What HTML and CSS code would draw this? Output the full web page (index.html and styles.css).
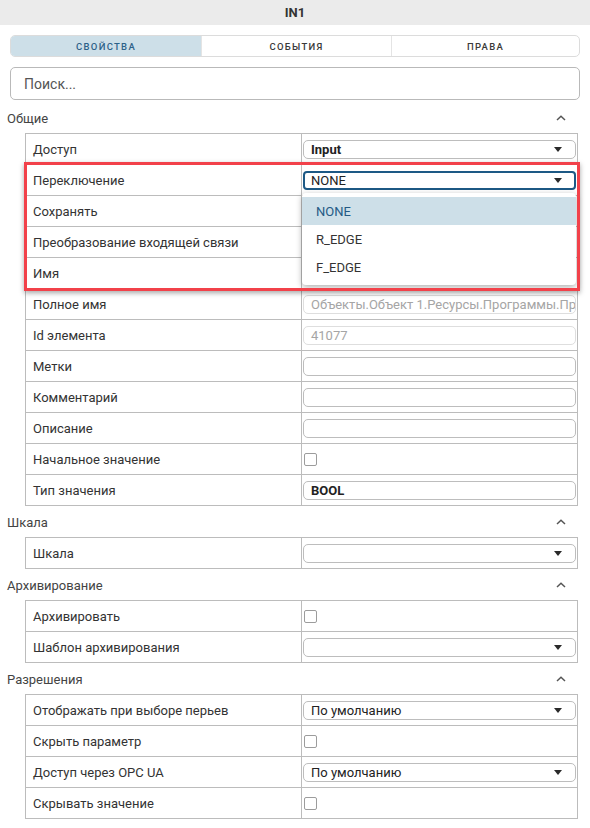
FILE: index.html
```html
<!DOCTYPE html>
<html lang="ru">
<head>
<meta charset="utf-8">
<title>IN1</title>
<link rel="stylesheet" href="styles.css">
</head>
<body>
<div class="title">IN1</div>

<div class="tabs">
  <div class="tab active">Свойства</div>
  <div class="tab">События</div>
  <div class="tab">Права</div>
</div>

<div class="search">Поиск...</div>

<section class="group">
  <div class="group-head"><span>Общие</span><svg class="chev" width="10" height="6" viewBox="0 0 10 6"><polyline points="1,5 5,1.2 9,5" fill="none" stroke="#555" stroke-width="1.5"/></svg></div>
  <div class="grid">
    <div class="row"><div class="label">Доступ</div><div class="value"><div class="select bold">Input<span class="arrow"></span></div></div></div>
    <div class="marked">
      <div class="row"><div class="label">Переключение</div><div class="value anchor">
        <div class="select focused">NONE<span class="arrow"></span></div>
        <ul class="menu">
          <li class="opt selected">NONE</li>
          <li class="opt">R_EDGE</li>
          <li class="opt">F_EDGE</li>
        </ul>
      </div></div>
      <div class="row"><div class="label">Сохранять</div><div class="value"></div></div>
      <div class="row"><div class="label">Преобразование входящей связи</div><div class="value"></div></div>
      <div class="row"><div class="label">Имя</div><div class="value"></div></div>
      <div class="annot"></div>
    </div>
    <div class="row"><div class="label">Полное имя</div><div class="value"><div class="field disabled">Объекты.Объект 1.Ресурсы.Программы.Пр</div></div></div>
    <div class="row"><div class="label">Id элемента</div><div class="value"><div class="field disabled">41077</div></div></div>
    <div class="row"><div class="label">Метки</div><div class="value"><div class="field"></div></div></div>
    <div class="row"><div class="label">Комментарий</div><div class="value"><div class="field"></div></div></div>
    <div class="row"><div class="label">Описание</div><div class="value"><div class="field"></div></div></div>
    <div class="row"><div class="label">Начальное значение</div><div class="value"><span class="check"></span></div></div>
    <div class="row"><div class="label">Тип значения</div><div class="value"><div class="field bold">BOOL</div></div></div>
  </div>
</section>

<section class="group">
  <div class="group-head"><span>Шкала</span><svg class="chev" width="10" height="6" viewBox="0 0 10 6"><polyline points="1,5 5,1.2 9,5" fill="none" stroke="#555" stroke-width="1.5"/></svg></div>
  <div class="grid">
    <div class="row"><div class="label">Шкала</div><div class="value"><div class="select"><span class="arrow"></span></div></div></div>
  </div>
</section>

<section class="group">
  <div class="group-head"><span>Архивирование</span><svg class="chev" width="10" height="6" viewBox="0 0 10 6"><polyline points="1,5 5,1.2 9,5" fill="none" stroke="#555" stroke-width="1.5"/></svg></div>
  <div class="grid">
    <div class="row"><div class="label">Архивировать</div><div class="value"><span class="check"></span></div></div>
    <div class="row"><div class="label">Шаблон архивирования</div><div class="value"><div class="select"><span class="arrow"></span></div></div></div>
  </div>
</section>

<section class="group">
  <div class="group-head"><span>Разрешения</span><svg class="chev" width="10" height="6" viewBox="0 0 10 6"><polyline points="1,5 5,1.2 9,5" fill="none" stroke="#555" stroke-width="1.5"/></svg></div>
  <div class="grid">
    <div class="row"><div class="label">Отображать при выборе перьев</div><div class="value"><div class="select">По умолчанию<span class="arrow"></span></div></div></div>
    <div class="row"><div class="label">Скрыть параметр</div><div class="value"><span class="check"></span></div></div>
    <div class="row"><div class="label">Доступ через OPC UA</div><div class="value"><div class="select">По умолчанию<span class="arrow"></span></div></div></div>
    <div class="row"><div class="label">Скрывать значение</div><div class="value"><span class="check"></span></div></div>
  </div>
</section>
</body>
</html>
```

FILE: styles.css
```css
* { box-sizing: border-box; }

html, body {
  margin: 0;
  padding: 0;
  background: #ffffff;
}

body {
  font-family: Roboto, "Noto Sans", "DejaVu Sans", sans-serif;
  font-size: 13px;
  color: #333;
  width: 590px;
  overflow: hidden;
}

.title {
  height: 25px;
  background: #ebebeb;
  display: flex;
  align-items: center;
  justify-content: center;
  font-weight: 700;
  font-size: 13px;
  color: #333;
}

.tabs {
  margin: 10px 10px 0 10px;
  height: 22px;
  border: 1px solid #dcdcdc;
  border-radius: 5px;
  overflow: hidden;
  display: grid;
  grid-template-columns: 190px 190px 1fr;
}

.tab {
  display: flex;
  align-items: center;
  justify-content: center;
  text-transform: uppercase;
  font-size: 9.5px;
  font-weight: 500;
  letter-spacing: 1.3px;
  color: #3a3a3a;
  border-left: 1px solid #e4e4e4;
}

.tab:first-child { border-left: none; }

.tab.active {
  background: #cddfe8;
  color: #2d6289;
}

.search {
  margin: 10px 10px 2px 10px;
  height: 33px;
  border: 1px solid #b9b9b9;
  border-radius: 5px;
  padding: 0 13px;
  display: flex;
  align-items: center;
  font-size: 14px;
  color: #555;
}

.group-head {
  height: 31px;
  display: flex;
  align-items: center;
  justify-content: space-between;
  padding: 1px 24px 0 7px;
  color: #444;
}

.chev { display: block; }

.grid {
  margin-left: 25px;
  width: 553px;
  border: 1px solid #bcbcbc;
  border-bottom: none;
}

.row {
  display: grid;
  grid-template-columns: 276px 1fr;
  height: 31px;
  border-bottom: 1px solid #bcbcbc;
}

.label {
  border-right: 1px solid #bcbcbc;
  padding: 1px 0 0 7px;
  display: flex;
  align-items: center;
  white-space: nowrap;
  color: #333;
}

.value {
  display: flex;
  align-items: center;
  padding: 0 1px;
  min-width: 0;
}

.anchor { position: relative; }

.select,
.field {
  position: relative;
  width: 100%;
  height: 19px;
  border: 1px solid #bdbdbd;
  border-radius: 5px;
  padding: 0 22px 0 7px;
  display: flex;
  align-items: center;
  white-space: nowrap;
  overflow: hidden;
  color: #222;
  line-height: 17px;
}

.field { padding-right: 4px; }

.bold { font-weight: 700; }

.field.disabled {
  border-color: #dedede;
  color: #a5a5a5;
}

.select.focused {
  border: 2px solid #1d5985;
  border-radius: 4px;
  padding-left: 6px;
}

.arrow {
  position: absolute;
  right: 13px;
  top: 50%;
  margin-top: -2px;
  width: 0;
  height: 0;
  border-left: 4px solid transparent;
  border-right: 4px solid transparent;
  border-top: 5px solid #2a2a2a;
}

.select.focused .arrow { right: 12px; }

.check {
  width: 13px;
  height: 13px;
  margin-left: 1px;
  border: 1.5px solid #9c9c9c;
  border-radius: 2px;
  background: #fff;
}

.marked { position: relative; }

.menu {
  position: absolute;
  top: 28px;
  left: 0;
  right: 1px;
  margin: 0;
  padding: 4px 0;
  list-style: none;
  background: #fff;
  border-radius: 4px;
  box-shadow: 0 2px 6px rgba(0, 0, 0, 0.32);
  z-index: 2;
}

.opt {
  height: 28px;
  padding-left: 14px;
  display: flex;
  align-items: center;
  color: #333;
}

.opt.selected {
  background: #cddfe8;
  color: #245a85;
}

.annot {
  position: absolute;
  top: -3px;
  bottom: -2px;
  left: -2px;
  right: -3px;
  border: 3px solid #f2414a;
  box-shadow: 0 2px 5px rgba(0, 0, 0, 0.35);
  pointer-events: none;
  z-index: 3;
}
```
